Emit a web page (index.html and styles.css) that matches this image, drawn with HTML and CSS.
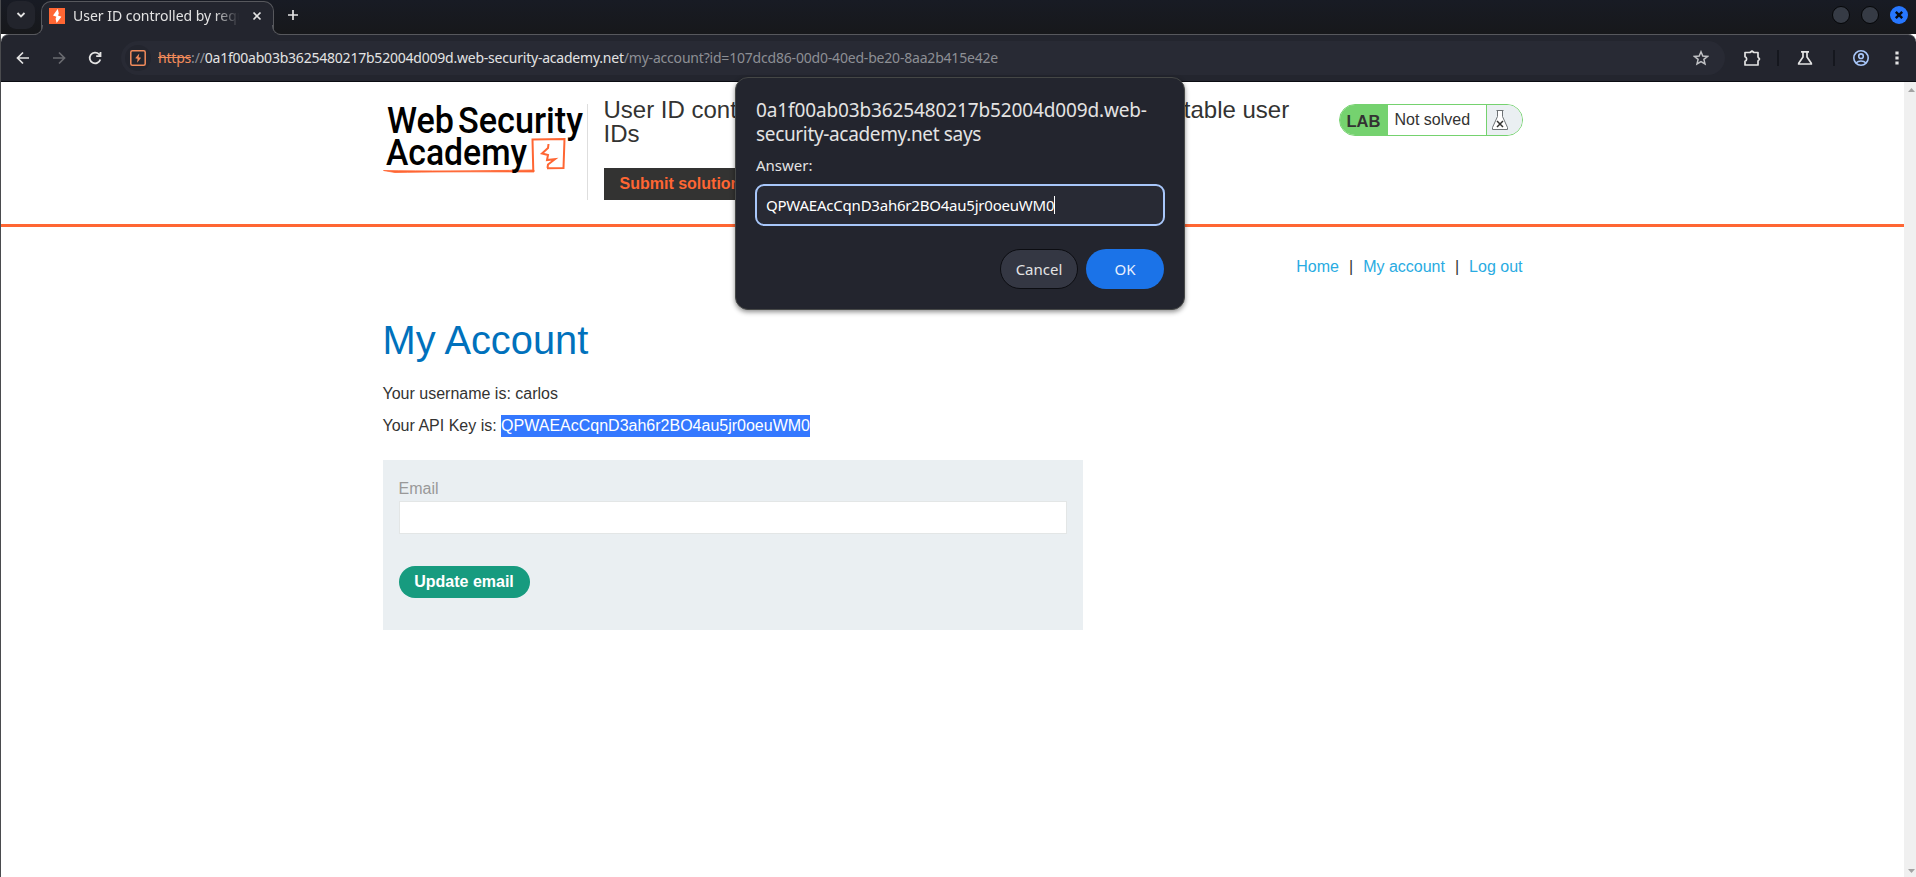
FILE: index.html
```html
<!DOCTYPE html>
<html lang="en">
<head>
<meta charset="utf-8">
<title>User ID controlled by request parameter, with unpredictable user IDs</title>
<link rel="stylesheet" href="styles.css">
</head>
<body>
<div class="window">
  <div class="tabstrip">
    <div class="tab-search"><svg width="10" height="10" viewBox="0 0 10 10"><path d="M1.5 3 5 6.5 8.500 3" fill="none" stroke="#e3e3e3" stroke-width="1.800"/></svg></div>
    <div class="tab">
      <svg class="favicon" width="16" height="16" viewBox="0 0 16 16"><rect width="16" height="16" fill="#ff6633"/><path d="M8.700 1 4 7.400 7.400 8.700 6.600 10.700 7.600 15 12.400 8.700 9 7.400 9.800 5.400 8.800 1z" fill="#fff"/></svg>
      <span class="tab-title">User ID controlled by request</span>
      <svg class="tab-close" width="10" height="10" viewBox="0 0 10 10"><path d="M1.500 1.500 8.500 8.500M8.500 1.500 1.500 8.500" stroke="#e3e3e3" stroke-width="1.700"/></svg>
    </div>
    <svg class="new-tab" width="12" height="12" viewBox="0 0 12 12"><path d="M6 1v10M1 6h10" stroke="#e3e3e3" stroke-width="1.700"/></svg>
    <div class="controls"><i></i><i></i><b><svg width="18" height="18" viewBox="0 0 18 18"><path d="M5.800 5.800 12.200 12.200M12.200 5.800 5.800 12.200" stroke="#080b12" stroke-width="2.400"/></svg></b></div>
  </div>
  <div class="toolbar">
    <svg class="tool back" width="16" height="16" viewBox="0 0 16 16"><path d="M14 8H3M8 2.500 2.500 8 8 13.500" fill="none" stroke="#e3e3e3" stroke-width="1.700"/></svg>
    <svg class="tool forward" width="16" height="16" viewBox="0 0 16 16"><path d="M2 8H13M8 2.500 13.500 8 8 13.500" fill="none" stroke="#696b70" stroke-width="1.700"/></svg>
    <svg class="tool reload" width="16" height="16" viewBox="0 0 16 16"><path d="M13.300 9.500A5.400 5.400 0 1 1 12 4.200L13.400 5.600M13.500 2v4.200H9.200" fill="none" stroke="#e3e3e3" stroke-width="1.800"/></svg>
    <div class="omnibox">
      <span class="site"><svg width="16" height="16" viewBox="0 0 16 16"><rect x=".8" y=".8" width="14.400" height="14.400" rx="1.500" fill="none" stroke="#f28b5b" stroke-width="1.500"/><path d="M9.300 3.500 5.200 8.200l2.400.5-.5 4 4-4.900-2.500-.5z" fill="#f28b5b"/></svg></span>
      <span class="url"><s>https</s>://<em>0a1f00ab03b3625480217b52004d009d.web-security-academy.net</em>/my-account?id=107dcd86-00d0-40ed-be20-8aa2b415e42e</span>
      <svg class="star" width="16" height="16" viewBox="0 0 16 16"><path d="M8 1.800 9.800 6l4.700.4-3.600 3 1.100 4.500L8 11.500 4 13.900l1.100-4.500-3.600-3L6.200 6z" fill="none" stroke="#c0c1c4" stroke-width="1.500"/></svg>
    </div>
    <svg class="puzzle" width="18" height="18" viewBox="0 0 18 18"><path d="M2 3.500h5L9 2l2 1.500h4V8l1.500 2-1.500 2v4H2v-3.800a2.300 2.300 0 0 0 0-4.400z" fill="none" stroke="#e3e3e3" stroke-width="1.700" stroke-linejoin="round"/></svg>
    <i class="sep"></i>
    <svg class="flask" width="16" height="16" viewBox="0 0 16 16"><path d="M4 1.800h8M6 2v5L1.700 13.200V14h12.600v-.8L10 7V2" fill="none" stroke="#e3e3e3" stroke-width="1.700"/></svg>
    <i class="sep"></i>
    <svg class="profile" width="18" height="18" viewBox="0 0 18 18"><g fill="none" stroke="#a8c7fa" stroke-width="1.600"><circle cx="9" cy="9" r="7.200"/><circle cx="9" cy="7.200" r="2.300"/><path d="M4 14c2.600-2.700 7.400-2.700 10 0"/></g></svg>
    <svg class="dots" width="4" height="16" viewBox="0 0 4 16"><path d="M.4 1.400h3.200v3H.4zM.4 6.500h3.200v3H.4zM.4 11.600h3.200v3H.4z" fill="#e3e3e3"/></svg>
  </div>
  <div class="viewport">
    <main class="page">
      <header class="lab-header">
        <div class="container head">
          <svg class="logo" width="204" height="96" viewBox="0 0 204 96">
            <path d="M.5 66.500Q60 67.500 151 66v2Q60 67.500 12 68.500z" fill="#ff6633" stroke="#ff6633" stroke-width=".8"/>
            <path d="M150.300 67.500 149.500 35.500l32-.5-1 29-16.500.3" fill="none" stroke="#ff6633" stroke-width="2"/>
            <path d="M165.500 40l-.5 4-6 5.500 6 1.500-1 5 8-.8-7 5.300-.5 3.500" fill="none" stroke="#ff6633" stroke-width="2"/>
            <text class="logo-text" x="4" y="28.500" textLength="67" lengthAdjust="spacingAndGlyphs">Web</text>
            <text class="logo-text" x="75" y="28.500" textLength="125" lengthAdjust="spacingAndGlyphs">Security</text>
            <text class="logo-text" x="3" y="60.500" textLength="141" lengthAdjust="spacingAndGlyphs">Academy</text>
          </svg>
          <div class="title-box">
            <h2>User ID controlled by request parameter, with unpredictable user IDs</h2>
            <button class="submit">Submit solution</button>
          </div>
          <div class="badge">
            <b>LAB</b><span>Not solved</span>
            <i><svg width="18" height="22" viewBox="0 0 18 22"><path d="M5.500 1.500h7M6.500 2v5.500L1.500 18.500v2h15v-2L11.500 7.500V2" fill="#fff" stroke="#6d7275" stroke-width="1"/><path d="M6 12l6 6M12 12l-6 6" stroke="#333332" stroke-width="1.500"/></svg></i>
          </div>
        </div>
      </header>
      <div class="container">
        <nav><a>Home</a><span>|</span><a>My account</a><span>|</span><a>Log out</a></nav>
        <h1>My Account</h1>
        <p>Your username is: carlos</p>
        <p>Your API Key is: <mark>QPWAEAcCqnD3ah6r2BO4au5jr0oeuWM0</mark></p>
        <form class="email-form">
          <label>Email</label>
          <input type="text">
          <button type="button">Update email</button>
        </form>
      </div>
    </main>
    <div class="scrollbar">
      <svg width="12" height="12" viewBox="0 0 12 12"><path d="M4 8 7.500 4 11 8z" fill="#a3a3a3"/></svg>
      <svg width="12" height="12" viewBox="0 0 12 12"><path d="M4 4 7.500 8 11 4z" fill="#a3a3a3"/></svg>
    </div>
  </div>
  <div class="dialog">
    <div class="origin"><span class="host">0a1f00ab03b3625480217b52004d009d.web-</span><br><span class="says">security-academy.net says</span></div>
    <div class="message">Answer:</div>
    <div class="prompt"><span>QPWAEAcCqnD3ah6r2BO4au5jr0oeuWM0</span><i></i></div>
    <div class="actions"><button class="cancel">Cancel</button><button class="ok">OK</button></div>
  </div>
</div>
</body>
</html>
```
FILE: styles.css
```css
* { box-sizing: border-box; }
body { margin: 0; font-family: "Liberation Sans", Arial, sans-serif; color: #333332; }
svg { display: block; flex: none; }
button { border: 0; font: inherit; margin: 0; }
.window { position: relative; width: 1916px; height: 877px; overflow: hidden; background: #fff; border-left: 1px solid #4a4b4e; display: flex; flex-direction: column; }

.tabstrip { height: 34px; flex: none; display: flex; background: linear-gradient(#181b24, #17181b); font-family: "Noto Sans", sans-serif; }
.tab-search { width: 28px; height: 28px; margin: 1px 0 0 6px; border-radius: 9px; background: #22242c; display: flex; align-items: center; justify-content: center; }
.tab { position: relative; z-index: 1; width: 233px; height: 34px; margin: 1px 0 -1px 6px; border: 1px solid #57585d; border-bottom: 0; border-radius: 10px 10px 0 0; background: #23252e; display: flex; align-items: center; padding: 0 11px 6px 7px; }
.tab::before, .tab::after { content: ""; position: absolute; bottom: 0; width: 9px; height: 9px; border-bottom: 1px solid #57585d; }
.tab::before { left: -9px; border-right: 1px solid #57585d; border-bottom-right-radius: 9px; box-shadow: 3px 3px 0 #23252e; clip-path: inset(0 -1px 0 0); }
.tab::after { right: -9px; border-left: 1px solid #57585d; border-bottom-left-radius: 9px; box-shadow: -3px 3px 0 #23252e; clip-path: inset(0 0 0 -1px); }
.tab-title { width: 168px; margin-left: 8px; font-size: 14px; line-height: 20px; letter-spacing: -.02px; white-space: nowrap; overflow: hidden; color: #e3e3e3; -webkit-mask-image: linear-gradient(90deg, #000 84%, transparent 99%); mask-image: linear-gradient(90deg, #000 84%, transparent 99%); }
.tab-close { margin-left: auto; }
.new-tab { margin: 9px 0 0 13px; }
.controls { margin: 6px 8px 0 auto; display: flex; gap: 11px; }
.controls i, .controls b { width: 18px; height: 18px; border-radius: 50%; }
.controls i { background: #363b45; border: 1px solid #050608; }
.controls b { background: #2777ff; }

.toolbar { height: 48px; flex: none; display: flex; align-items: center; background: #23252e; border-top: 1px solid #57585d; border-bottom: 1px solid #0b0c12; border-radius: 8px 8px 0 0; }
.back { margin-left: 14px; }
.forward { margin-left: 20px; }
.reload { margin-left: 20px; }
.omnibox { width: 1604px; height: 34px; margin-left: 18px; border-radius: 17px; background: #282a34; display: flex; align-items: center; padding: 0 16px 0 4px; font-family: "Noto Sans", sans-serif; }
.site { width: 26px; height: 26px; border-radius: 50%; background: #23252e; display: flex; align-items: center; justify-content: center; }
.url { margin-left: 7px; font-size: 14px; line-height: 20px; letter-spacing: -.195px; color: #8d8f94; white-space: nowrap; }
.url s { color: #f28b5b; }
.url em { font-style: normal; color: #e3e3e3; letter-spacing: -.22px; }
.star { margin-left: auto; }
.puzzle { margin-left: 18px; }
.sep { width: 2px; height: 16px; background: #15171e; margin-left: 16px; }
.flask { margin-left: 18px; }
.flask + .sep { margin-left: 20px; }
.profile { margin-left: 17px; }
.dots { margin-left: 25px; }

.viewport { flex: 1; display: flex; min-height: 0; }
.page { flex: 1; }
.scrollbar { width: 12px; background: #f0f0f0; display: flex; flex-direction: column; justify-content: space-between; padding: 2px 0 0; }
.container { width: 1140px; margin: 0 auto; }
.lab-header { height: 145px; border-bottom: 3px solid #ff6633; }
.head { display: flex; align-items: flex-start; padding-top: 22px; }
.logo { width: 205px; border-right: 1px solid #dedede; overflow: visible; }
.logo-text { font: 500 37px "Roboto", sans-serif; fill: #000; }
.title-box { width: 700px; margin: -6px 0 0 16px; }
h2 { margin: 0; font-size: 24px; font-weight: 400; line-height: 24px; padding-bottom: 22px; }
.submit { display: block; height: 32px; padding: 0 16px; background: #333332; color: #ff6633; font-weight: 700; font-size: 16px; }
.badge { width: 184px; height: 32px; margin-left: auto; border: 1px solid #75d26f; border-radius: 16px; overflow: hidden; display: flex; font-size: 16px; line-height: 30px; }
.badge b { width: 48px; padding: 1px 0 0 7px; background: #75d26f; font-size: 16.500px; }
.badge span { width: 99px; padding-left: 7px; border-right: 1px solid #75d26f; }
.badge i { flex: 1; background: #eaeff2; padding: 4px 0 0 4px; }
nav { display: flex; justify-content: flex-end; padding-top: 30px; font-size: 16px; line-height: 19px; color: #333332; }
nav a { color: #29abe2; }
nav span { margin: 0 10px; }
h1 { margin: 39px 0 0; font-size: 39.800px; line-height: 50px; font-weight: 400; color: #0071bc; }
p { margin: 18px 0 0; font-size: 16px; line-height: 22px; height: 22px; }
p + p { margin-top: 10px; }
mark { display: inline-block; height: 22px; background: #3478ff; color: #fff; }
.email-form { width: 700px; height: 170px; margin-top: 23px; padding: 16px; background: #eaeff2; }
.email-form label { display: block; font-size: 16px; line-height: 25px; color: #999; }
.email-form input { display: block; width: 668px; height: 33px; border: 1px solid #e3e6e6; background: #fff; }
.email-form button { width: 131px; height: 32px; margin-top: 32px; border-radius: 16px; background: #179b7f; color: #fff; font-size: 16px; font-weight: 700; padding: 0; }

.dialog { position: absolute; left: 734px; top: 77px; width: 450px; height: 233px; padding: 20px; background: #23252e; border: 1px solid #454746; border-radius: 13px; box-shadow: 0 2px 5px rgba(0,0,0,.45); color: #e3e3e3; font-family: "Noto Sans", sans-serif; }
.origin { font-size: 19px; line-height: 24px; white-space: nowrap; }
.host { letter-spacing: -.13px; }
.says { letter-spacing: -.34px; }
.message { font-size: 15px; line-height: 20px; margin-top: 9px; }
.prompt { width: 410px; height: 42px; margin: 9px 0 0 -1px; border: 2px solid #a8c7fa; border-radius: 9px; background: #282a34; padding-left: 9px; display: flex; align-items: center; font-size: 15px; letter-spacing: -.22px; color: #fff; }
.prompt i { width: 1px; height: 18px; background: #fff; }
.actions { display: flex; justify-content: flex-end; gap: 8px; margin-top: 23px; }
.actions button { width: 78px; height: 40px; border-radius: 20px; padding: 0; font-size: 15px; }
.cancel { background: #343743; border: 1px solid #0c0d12; color: #e3e3e3; }
.ok { background: #1b73e8; color: #e8f0fe; }
```
